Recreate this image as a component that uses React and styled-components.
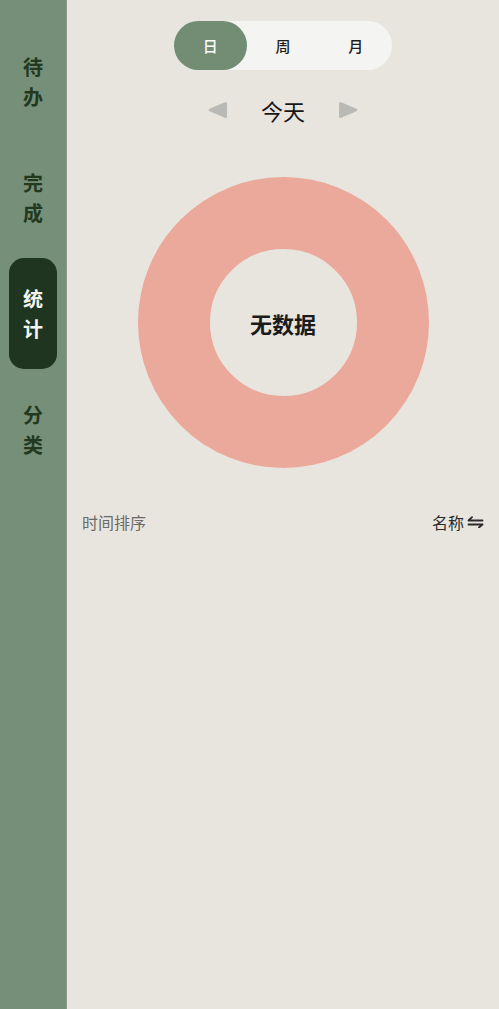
import React, {useState} from "react";
import styled, {createGlobalStyle} from "styled-components";

const GlobalStyle = createGlobalStyle`
    html, body {
        margin: 0;
        padding: 0;
        background: #e8e5df;
    }
    body {
        font-family: "Noto Sans CJK SC", "Noto Sans", sans-serif;
    }
`;

const PageStyle = styled.div`
    display: flex;
    height: 1009px;
    width: 499px;
    overflow: hidden;
    background: #e8e5df;
`;

const SidebarStyle = styled.nav`
    width: 67px;
    flex-shrink: 0;
    background: #768f78;
    border-right: 1px solid #889d89;
    box-sizing: border-box;
    display: flex;
    flex-direction: column;
    padding: 26px 0 0 9px;
    gap: 5px;
`;

const NavItemStyle = styled.div`
    width: 48px;
    height: 111px;
    border-radius: 15px;
    background: ${({active}) => active ? "#1f3520" : "transparent"};
    color: ${({active}) => active ? "#f4f4ee" : "#22391f"};
    display: flex;
    flex-direction: column;
    align-items: center;
    justify-content: center;
    font-size: 20px;
    font-weight: 700;
    line-height: 30px;
    cursor: pointer;
`;

const MainStyle = styled.main`
    flex: 1;
    display: flex;
    flex-direction: column;
    align-items: center;
`;

const SegmentedStyle = styled.div`
    margin-top: 21px;
    width: 218px;
    height: 49px;
    border-radius: 25px;
    background: #f4f4f2;
    display: flex;
`;

const SegmentStyle = styled.div`
    flex: 1;
    border-radius: 25px;
    display: flex;
    align-items: center;
    justify-content: center;
    font-size: 15px;
    font-weight: 500;
    background: ${({active}) => active ? "#738c74" : "transparent"};
    color: ${({active}) => active ? "#ffffff" : "#1e1e1e"};
    cursor: pointer;
`;

const DateRowStyle = styled.div`
    margin-top: 25px;
    height: 30px;
    display: flex;
    align-items: center;
    gap: 31px;
`;

const DateTextStyle = styled.div`
    width: 46px;
    text-align: center;
    font-size: 22px;
    color: #161616;
    line-height: 30px;
`;

const ArrowButton = styled.svg`
    width: 22px;
    height: 18px;
    display: block;
    cursor: pointer;
`;

const DonutStyle = styled.div`
    margin-top: 52px;
    width: 291px;
    height: 291px;
    box-sizing: border-box;
    border-radius: 50%;
    border: 72px solid #eba99b;
    display: flex;
    align-items: center;
    justify-content: center;
    font-size: 22px;
    font-weight: 700;
    color: #1b1b1b;
`;

const SortRowStyle = styled.div`
    align-self: stretch;
    margin-top: 42px;
    padding: 0 15px;
    height: 24px;
    display: flex;
    align-items: center;
    justify-content: space-between;
    font-size: 16px;
`;

const SortLabelStyle = styled.span`
    color: #6a6a68;
`;

const SortToggleStyle = styled.span`
    display: flex;
    align-items: center;
    gap: 3px;
    color: #2a2a2a;
    cursor: pointer;
`;

const SwapIcon = () => (
    <svg width="17" height="12" viewBox="0 0 17 12" fill="none" stroke="#2a2a2a" strokeWidth="1.8" strokeLinecap="round">
        <path d="M1.5 4.5 H15.5 M1.5 4.5 L5 1.2"/>
        <path d="M1.5 8.5 H15.5 M15.5 8.5 L12 11.5"/>
    </svg>
);

const navItems = [["待", "办"], ["完", "成"], ["统", "计"], ["分", "类"]];
const ranges = ["日", "周", "月"];

export default function App() {
    const [tab, setTab] = useState(2);
    const [range, setRange] = useState(0);

    return <>
        <GlobalStyle/>
        <PageStyle>
            <SidebarStyle>
                {navItems.map((chars, i) =>
                    <NavItemStyle key={i} active={i === tab} onClick={() => setTab(i)}>
                        <span>{chars[0]}</span>
                        <span>{chars[1]}</span>
                    </NavItemStyle>
                )}
            </SidebarStyle>

            <MainStyle>
                <SegmentedStyle>
                    {ranges.map((r, i) =>
                        <SegmentStyle key={r} active={i === range} onClick={() => setRange(i)}>{r}</SegmentStyle>
                    )}
                </SegmentedStyle>

                <DateRowStyle>
                    <ArrowButton viewBox="0 0 22 18">
                        <path d="M20 2.5 L20 15.5 Q20 17.8 17.8 16.8 L2.6 10.2 Q0.6 9 2.6 7.8 L17.8 1.2 Q20 0.2 20 2.5 Z" fill="#b9b9b6"/>
                    </ArrowButton>
                    <DateTextStyle>今天</DateTextStyle>
                    <ArrowButton viewBox="0 0 22 18">
                        <path d="M2 2.5 L2 15.5 Q2 17.8 4.2 16.8 L19.4 10.2 Q21.4 9 19.4 7.8 L4.2 1.2 Q2 0.2 2 2.5 Z" fill="#b9b9b6"/>
                    </ArrowButton>
                </DateRowStyle>

                <DonutStyle>无数据</DonutStyle>

                <SortRowStyle>
                    <SortLabelStyle>时间排序</SortLabelStyle>
                    <SortToggleStyle>名称<SwapIcon/></SortToggleStyle>
                </SortRowStyle>
            </MainStyle>
        </PageStyle>
    </>;
}
